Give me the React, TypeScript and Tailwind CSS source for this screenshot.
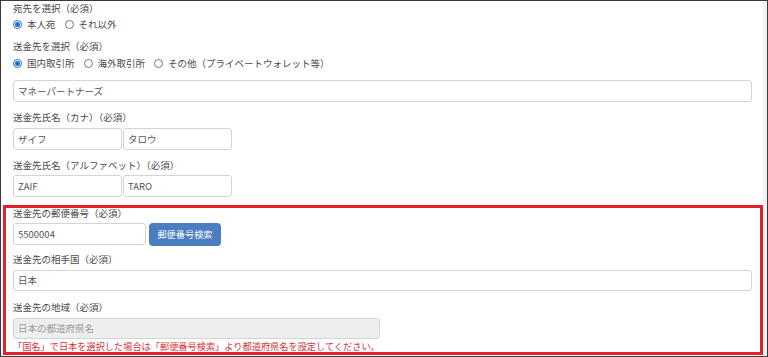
import React from "react";

const font = { fontFamily: '"Noto Sans CJK JP", "Noto Sans", sans-serif' };

function Radio({ checked, label }: { checked?: boolean; label: string }) {
  return (
    <label className="flex items-center gap-[5px] mr-[9px]">
      {checked ? (
        <span className="w-[9px] h-[9px] rounded-full border border-[#1a6fd6] flex items-center justify-center">
          <span className="w-[5px] h-[5px] rounded-full bg-[#1a6fd6]" />
        </span>
      ) : (
        <span className="w-[9px] h-[9px] rounded-full border border-[#767676] bg-white" />
      )}
      <span>{label}</span>
    </label>
  );
}

function Label({ children, className = "" }: { children: React.ReactNode; className?: string }) {
  return <div className={`h-[14px] leading-[14px] text-[#4a4a4a] ${className}`}>{children}</div>;
}

function Field({
  value,
  className = "",
  disabled,
}: {
  value: string;
  className?: string;
  disabled?: boolean;
}) {
  return (
    <div
      className={`h-[22px] flex items-center px-[4px] border border-[#d4d4d4] rounded-[3px] ${
        disabled ? "bg-[#eeeeee] text-[#9a9a9a]" : "bg-white text-[#555]"
      } ${className}`}
    >
      {value}
    </div>
  );
}

export default function App() {
  return (
    <div
      className="w-[768px] h-[357px] border border-[#3a3a3a] bg-white flex overflow-hidden text-[9.5px]"
      style={font}
    >
      <div className="flex-1 flex flex-col">
        <div className="pl-[12px]">
          <Label>宛先を選択（必須）</Label>
          <div className="mt-[2px] h-[14px] flex items-center text-[#4a4a4a]">
            <Radio checked label="本人宛" />
            <Radio label="それ以外" />
          </div>
          <Label className="mt-[8px]">送金先を選択（必須）</Label>
          <div className="mt-[3px] h-[14px] flex items-center text-[#4a4a4a]">
            <Radio checked label="国内取引所" />
            <Radio label="海外取引所" />
            <Radio label="その他（プライベートウォレット等）" />
          </div>
          <Field value="マネーパートナーズ" className="mt-[10px] w-[739px]" />
          <Label className="mt-[8px]">送金先氏名（カナ）（必須）</Label>
          <div className="mt-[4px] flex gap-[1px]">
            <Field value="ザイフ" className="w-[109px]" />
            <Field value="タロウ" className="w-[109px]" />
          </div>
          <Label className="mt-[8px]">送金先氏名（アルファベット）（必須）</Label>
          <div className="mt-[3px] flex gap-[1px]">
            <Field value="ZAIF" className="w-[109px]" />
            <Field value="TARO" className="w-[109px]" />
          </div>
        </div>

        <div className="mt-[8px] ml-[2px] w-[760px] h-[150px] border-[3px] border-[#e3202c] pl-[7px] pr-[8px] flex flex-col">
          <div className="h-[10px] leading-[10px] text-[#4a4a4a]">送金先の郵便番号（必須）</div>
          <div className="mt-[5px] flex gap-[3px]">
            <Field value="5500004" className="w-[133px]" />
            <button className="w-[72px] h-[23px] rounded-[4px] bg-[#4a7ec0] text-white text-[9.2px] flex items-center justify-center">
              郵便番号検索
            </button>
          </div>
          <Label className="mt-[6px]">送金先の相手国（必須）</Label>
          <Field value="日本" className="mt-[4px] w-[739px]" />
          <Label className="mt-[9px]">送金先の地域（必須）</Label>
          <Field value="日本の都道府県名" disabled className="mt-[4px] w-[367px]" />
          <div className="mt-[1px] h-[12px] leading-[12px] text-[9.2px] text-[#d8333b]">
            「国名」で日本を選択した場合は「郵便番号検索」より都道府県名を設定してください。
          </div>
        </div>
      </div>
      <div className="w-[5px] bg-[#f1f1f1]" />
    </div>
  );
}
